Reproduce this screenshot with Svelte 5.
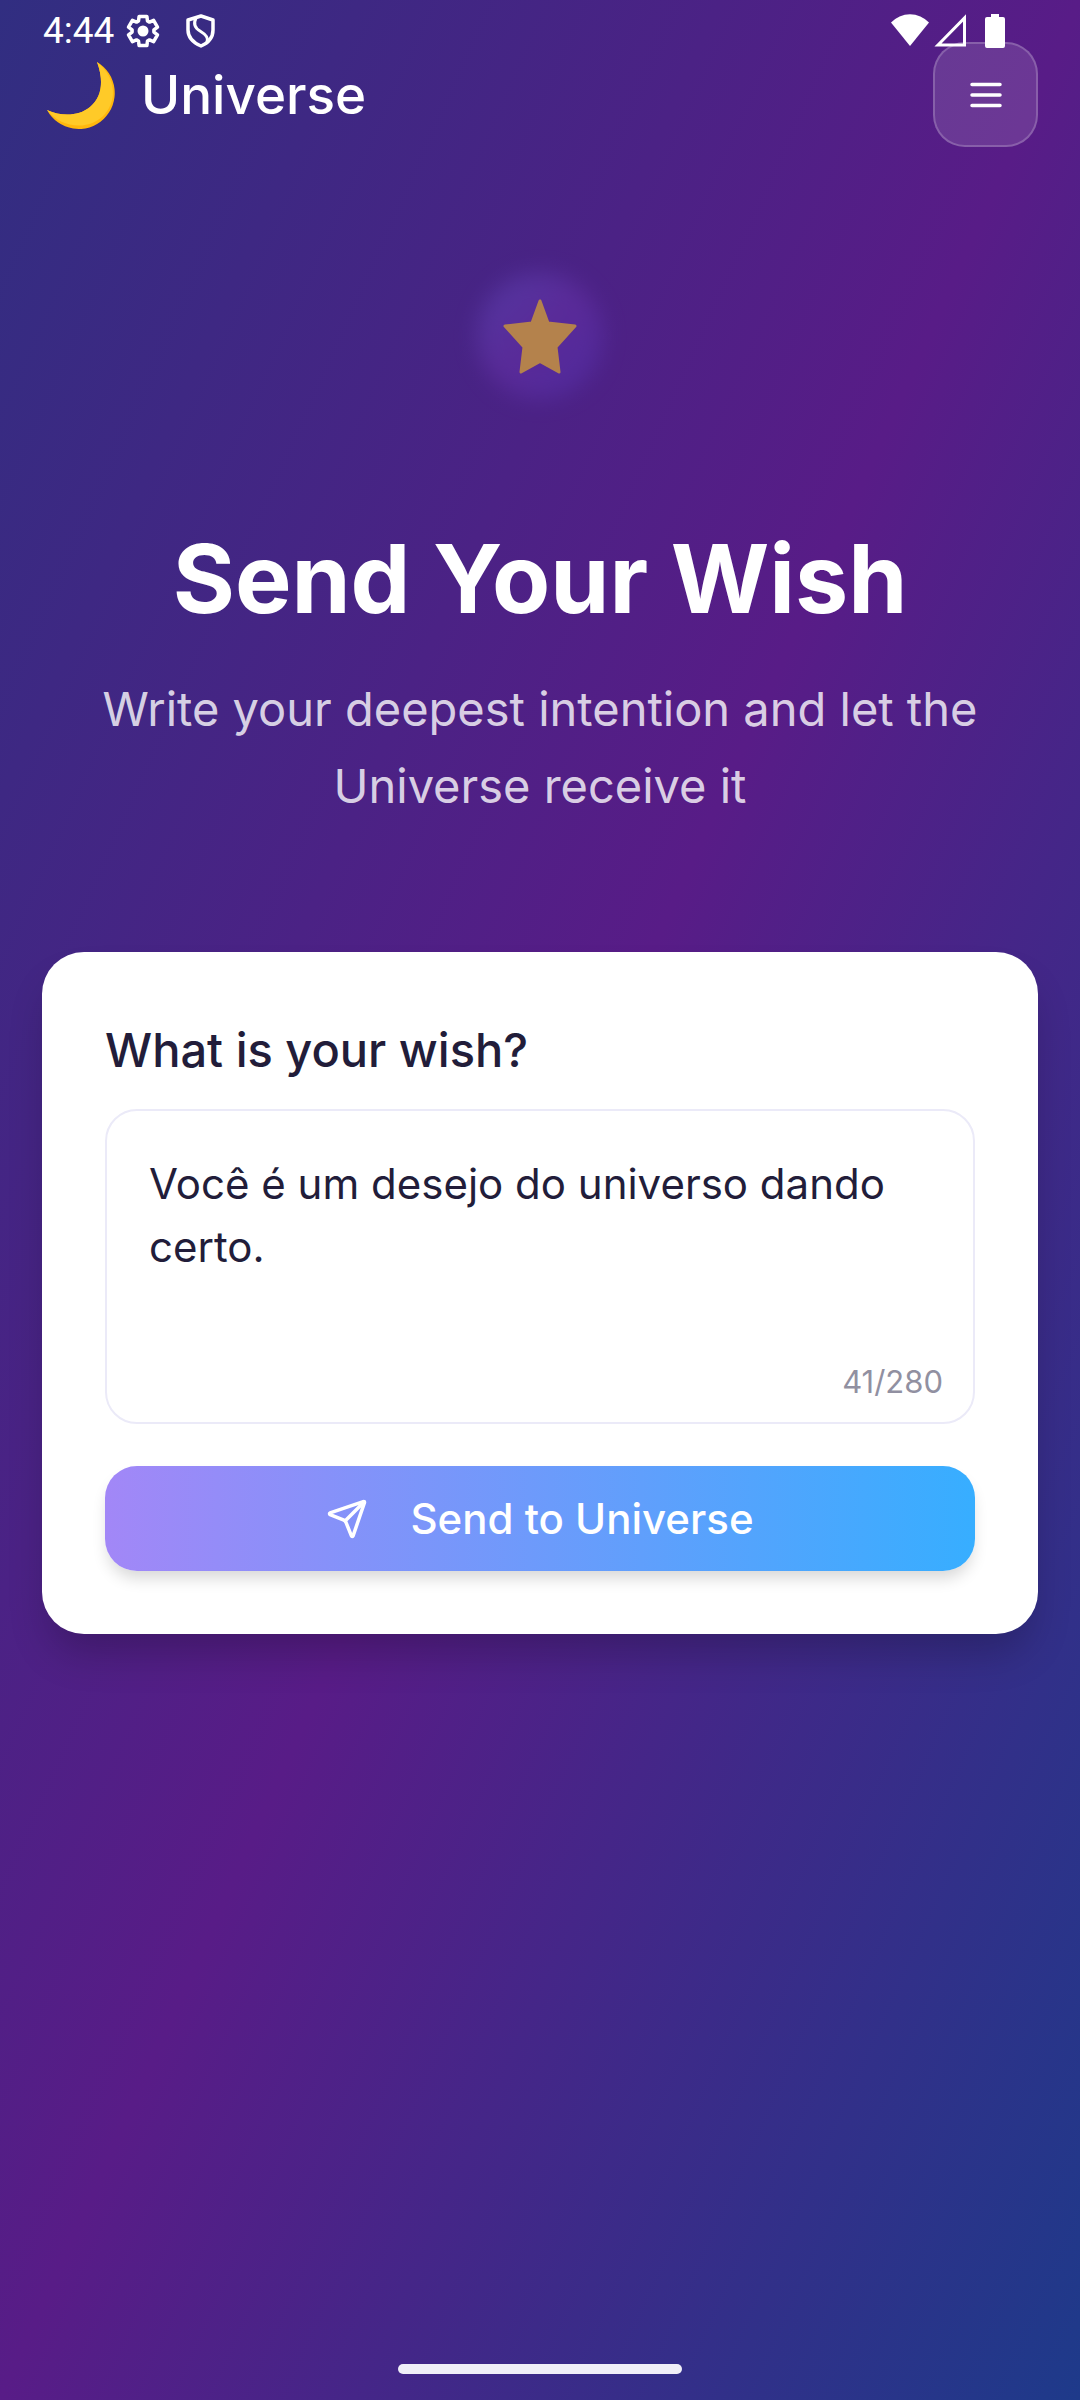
<script lang="ts">
  const limit = 280;
  let wish = $state('Você é um desejo do universo dando certo.');

  // six-toothed cog: [radius, degrees off the tooth's axis]
  const tooth = [[11, -24], [15, -15], [15, 15], [11, 24]];
  const cog = [0, 60, 120, 180, 240, 300]
    .flatMap((axis) =>
      tooth.map(([r, off]) => {
        const a = ((axis + off) * Math.PI) / 180;
        return `${(18 + r * Math.sin(a)).toFixed(1)},${(18 - r * Math.cos(a)).toFixed(1)}`;
      })
    )
    .join(' ');
</script>

<div class="app">
  <div class="status">
    <span class="clock">4:44</span>
    <svg class="gear" width="36" height="36" viewBox="0 0 36 36" fill="none" stroke="#fff" stroke-width="3.5" stroke-linejoin="round" aria-hidden="true">
      <polygon points={cog} />
      <circle cx="18" cy="18" r="5.5" fill="#fff" stroke="none" />
    </svg>
    <svg class="shield" width="32" height="36" viewBox="0 0 32 36" fill="none" stroke="#fff" stroke-width="3.5" stroke-linejoin="round" aria-hidden="true">
      <path d="M16 3 28 7v10c0 8-5 13-12 16C9 30 3 25 3 17V7z" />
      <path d="M11 5c-3 6-1 10 4 13s9 7 7 11" stroke-width="3" />
    </svg>
    <span class="spacer"></span>
    <svg class="wifi" width="40" height="36" viewBox="0 0 40 36" fill="#fff" aria-hidden="true"><path d="M1 9.500a26 26 0 0 1 38 0L20 33z" /></svg>
    <svg width="34" height="36" viewBox="0 0 34 36" fill="none" stroke="#fff" stroke-width="3" aria-hidden="true"><path d="M4 32 30.500 5v27z" /></svg>
    <svg class="battery" width="20" height="36" viewBox="0 0 20 36" fill="#fff" aria-hidden="true"><path d="M6 1h8v3h4a2 2 0 0 1 2 2v27a2 2 0 0 1-2 2H2a2 2 0 0 1-2-2V6a2 2 0 0 1 2-2h4z" /></svg>
  </div>

  <header>
    <div class="brand">
      <svg width="76" height="76" viewBox="0 0 76 76" aria-hidden="true">
        <path d="M55 5A36 36 0 1 1 5 53C20 60 37 59 48 50 60 40 62 24 55 5z" fill="#ffb70d" />
        <path d="M55 5C73 19 76 42 63 57 48 74 20 72 5 53 20 60 37 59 48 50 60 40 62 24 55 5z" fill="#ffca28" />
      </svg>
      <span>Universe</span>
    </div>
    <button class="menu" aria-label="Menu">
      <svg width="42" height="42" viewBox="0 0 24 24" fill="none" stroke="currentColor" stroke-width="2" stroke-linecap="round" aria-hidden="true">
        <path d="M4 6h16M4 12h16M4 18h16" />
      </svg>
    </button>
  </header>

  <main>
    <section class="hero">
      <div class="emblem">
        <svg width="84" height="84" viewBox="0 0 84 84" aria-hidden="true">
          <path d="M42 7 50 29 77 32 58 53 61 78 42 67.500 23 78 26 53 7 32 34 29z" fill="#b4824c" stroke="#b4824c" stroke-width="3" stroke-linejoin="round" />
        </svg>
      </div>
      <h1>Send Your Wish</h1>
      <p>Write your deepest intention and let the Universe receive it</p>
    </section>

    <form class="card" onsubmit={(e) => e.preventDefault()}>
      <label for="wish">What is your wish?</label>
      <div class="field">
        <textarea id="wish" maxlength={limit} spellcheck="false" bind:value={wish}></textarea>
        <span class="count">{wish.length}/{limit}</span>
      </div>
      <button class="send" type="submit">
        <svg width="42" height="42" viewBox="0 0 24 24" fill="none" stroke="currentColor" stroke-width="2" stroke-linecap="round" stroke-linejoin="round" aria-hidden="true">
          <path d="M14.536 21.686a.5.5 0 0 0 .937-.024l6.500-19a.496.496 0 0 0-.635-.635l-19 6.500a.5.5 0 0 0-.024.937l7.930 3.180a2 2 0 0 1 1.112 1.110z" />
          <path d="m21.854 2.147-10.940 10.939" />
        </svg>
        Send to Universe
      </button>
    </form>
  </main>

  <div class="home-bar"></div>
</div>

<style>
  :global(body) {
    margin: 0;
  }
  .app {
    --ink: #221d3a;
    --gutter: 42px;
    min-height: 100vh;
    box-sizing: border-box;
    display: flex;
    flex-direction: column;
    font-family: Inter, 'Noto Sans', sans-serif;
    color: #fff;
    background: linear-gradient(to bottom right, #312e81, #581c87, #1e3a8a);
  }
  button,
  textarea {
    font: inherit;
    box-sizing: border-box;
  }
  svg {
    display: block;
    flex: none;
  }

  .status {
    height: 42px;
    padding: 13px 75px 0 43px;
    box-sizing: border-box;
    display: flex;
    align-items: flex-start;
    position: relative;
    z-index: 1;
  }
  .clock {
    font-family: Roboto, sans-serif;
    font-size: 37px;
    line-height: 36px;
  }
  .gear { margin-left: 11px; }
  .shield { margin-left: 24px; }
  .spacer { flex: 1; }
  .wifi { margin-right: 4px; }
  .battery { margin-left: 17px; }

  header {
    display: flex;
    align-items: center;
    justify-content: space-between;
    padding: 0 var(--gutter);
  }
  .brand {
    display: flex;
    align-items: center;
    gap: 23px;
    font-size: 53px;
    font-weight: 500;
  }
  .menu {
    width: 105px;
    height: 105px;
    padding: 0;
    display: grid;
    place-items: center;
    color: #fff;
    background: rgba(255, 255, 255, 0.12);
    border: 2px solid rgba(255, 255, 255, 0.2);
    border-radius: 32px;
  }

  main {
    flex: 1;
    padding: 126px var(--gutter) 0;
  }
  .hero {
    display: flex;
    flex-direction: column;
    align-items: center;
    text-align: center;
    margin-bottom: 128px;
  }
  .emblem {
    width: 126px;
    height: 126px;
    display: grid;
    place-items: center;
    position: relative;
  }
  .emblem::before {
    content: '';
    position: absolute;
    inset: 0;
    border-radius: 50%;
    background: linear-gradient(to bottom right, #5b46b4, #6430a6, #5030ac);
    opacity: 0.6;
    filter: blur(11px);
  }
  .emblem svg { position: relative; }
  h1 {
    margin: 127px 0 39px;
    font-size: 95px;
    line-height: 105px;
    font-weight: 700;
  }
  p {
    margin: 0;
    font-size: 47px;
    line-height: 77px;
    color: rgba(255, 255, 255, 0.8);
  }

  .card {
    padding: 63px;
    color: var(--ink);
    background: #fff;
    border-radius: 42px;
    box-shadow: 0 26px 40px -8px rgba(0, 0, 0, 0.22);
  }
  label {
    display: block;
    margin-bottom: 24px;
    font-size: 47px;
    line-height: 70px;
    font-weight: 500;
  }
  .field {
    position: relative;
    margin-bottom: 42px;
  }
  textarea {
    display: block;
    width: 100%;
    height: 315px;
    padding: 41px 42px;
    font-size: 42px;
    line-height: 63px;
    color: inherit;
    background: #fff;
    border: 2px solid #ebeaf8;
    border-radius: 32px;
    outline: none;
    resize: none;
  }
  .count {
    position: absolute;
    right: 32px;
    bottom: 21px;
    font-size: 31px;
    line-height: 42px;
    color: #9190a1;
  }
  .send {
    width: 100%;
    height: 105px;
    display: flex;
    align-items: center;
    justify-content: center;
    gap: 42px;
    border: 0;
    border-radius: 32px;
    font-size: 42px;
    font-weight: 500;
    color: #fff;
    background: linear-gradient(to right, #a287f7, #37aeff);
    box-shadow: 0 10px 16px -3px rgba(0, 0, 0, 0.16);
  }

  .home-bar {
    width: 284px;
    height: 10px;
    margin: 0 auto 26px;
    border-radius: 5px;
    background: #f0eff8;
  }
</style>
